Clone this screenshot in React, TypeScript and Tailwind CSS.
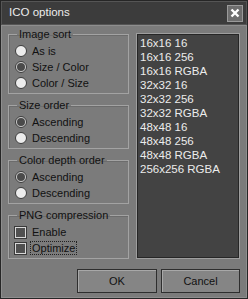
import React from "react";

type Opt = { label: string; checked?: boolean };

function Radio({ label, checked }: Opt) {
  return (
    <div className="flex h-[16px] items-center gap-[5px] pl-[6px]">
      <span
        className={
          "flex h-[12px] w-[12px] items-center justify-center rounded-full border border-[#3c3c3c] " +
          (checked ? "bg-[#cfcfcf]" : "bg-[#ececec]")
        }
      >
        {checked && <span className="h-[8px] w-[8px] rounded-full bg-[#4a4a4a]" />}
      </span>
      <span>{label}</span>
    </div>
  );
}

function Check({ label, focus }: { label: string; focus?: boolean }) {
  return (
    <div className="flex h-[16px] items-center gap-[4px] pl-[6px]">
      <span className="h-[11px] w-[11px] border border-[#d8d8d8] bg-[#505050] outline outline-1 outline-[#3a3a3a]" />
      <span className={focus ? "border border-dotted border-[#222] px-[1px] leading-[12px]" : "px-[2px]"}>
        {label}
      </span>
    </div>
  );
}

function Group({ title, children }: { title: string; children: React.ReactNode }) {
  return (
    <fieldset className="border border-[#a3a3a3] px-0 pb-[2px] pt-[2px] shadow-[inset_1px_1px_0_#6c6c6c]">
      <legend className="ml-[8px] px-[2px] leading-[13px]">{title}</legend>
      {children}
    </fieldset>
  );
}

const sizes = [
  "16x16 16",
  "16x16 256",
  "16x16 RGBA",
  "32x32 16",
  "32x32 256",
  "32x32 RGBA",
  "48x48 16",
  "48x48 256",
  "48x48 RGBA",
  "256x256 RGBA",
];

export default function App() {
  return (
    <div
      className="flex h-[299px] w-[248px] flex-col border border-[#262626] bg-[#3b3b3b] text-[11px] text-[#111]"
      style={{ fontFamily: '"Liberation Sans", Arial, sans-serif' }}
    >
      {/* title bar */}
      <div className="flex h-[24px] items-center justify-between border border-[#555] bg-[#3c3c3c] pl-[7px] pr-[3px]">
        <span className="text-[11.5px] text-[#ececec]">ICO options</span>
        <span className="flex h-[17px] w-[16px] items-center justify-center border border-[#9a9a9a] bg-[#6e6e6e]">
          <svg width="10" height="10" viewBox="0 0 10 10">
            <path d="M1.5 1.5 L8.5 8.5 M8.5 1.5 L1.5 8.5" stroke="#fff" strokeWidth="2.4" />
          </svg>
        </span>
      </div>

      {/* body */}
      <div className="flex flex-1 flex-col border border-[#8e8e8e] bg-[#7b7b7b] px-[6px] pb-[4px] pt-[2px]">
        <div className="flex gap-[7px]">
          <div className="flex w-[121px] flex-col gap-[5px]">
            <Group title="Image sort">
              <Radio label="As is" />
              <Radio label="Size / Color" checked />
              <Radio label="Color / Size" />
            </Group>
            <Group title="Size order">
              <Radio label="Ascending" checked />
              <Radio label="Descending" />
            </Group>
            <Group title="Color depth order">
              <Radio label="Ascending" checked />
              <Radio label="Descending" />
            </Group>
            <Group title="PNG compression">
              <Check label="Enable" />
              <Check label="Optimize" focus />
            </Group>
          </div>

          <div className="mt-[5px] h-[226px] flex-1 border border-[#9e9e9e]">
            <div className="h-full border border-[#262626] bg-[#434343] px-[2px] pt-[1px] text-[11.5px] text-[#ececec]">
              {sizes.map((s) => (
                <div key={s} className="h-[14px] leading-[14px]">
                  {s}
                </div>
              ))}
            </div>
          </div>
        </div>

        <div className="mt-auto flex justify-end gap-[4px]">
          <button className="h-[24px] w-[80px] border border-[#2e2e2e] bg-[#858585] shadow-[inset_1px_1px_0_#a8a8a8]">
            OK
          </button>
          <button className="h-[24px] w-[79px] border border-[#2e2e2e] bg-[#858585] shadow-[inset_1px_1px_0_#a8a8a8]">
            Cancel
          </button>
        </div>
      </div>
    </div>
  );
}
